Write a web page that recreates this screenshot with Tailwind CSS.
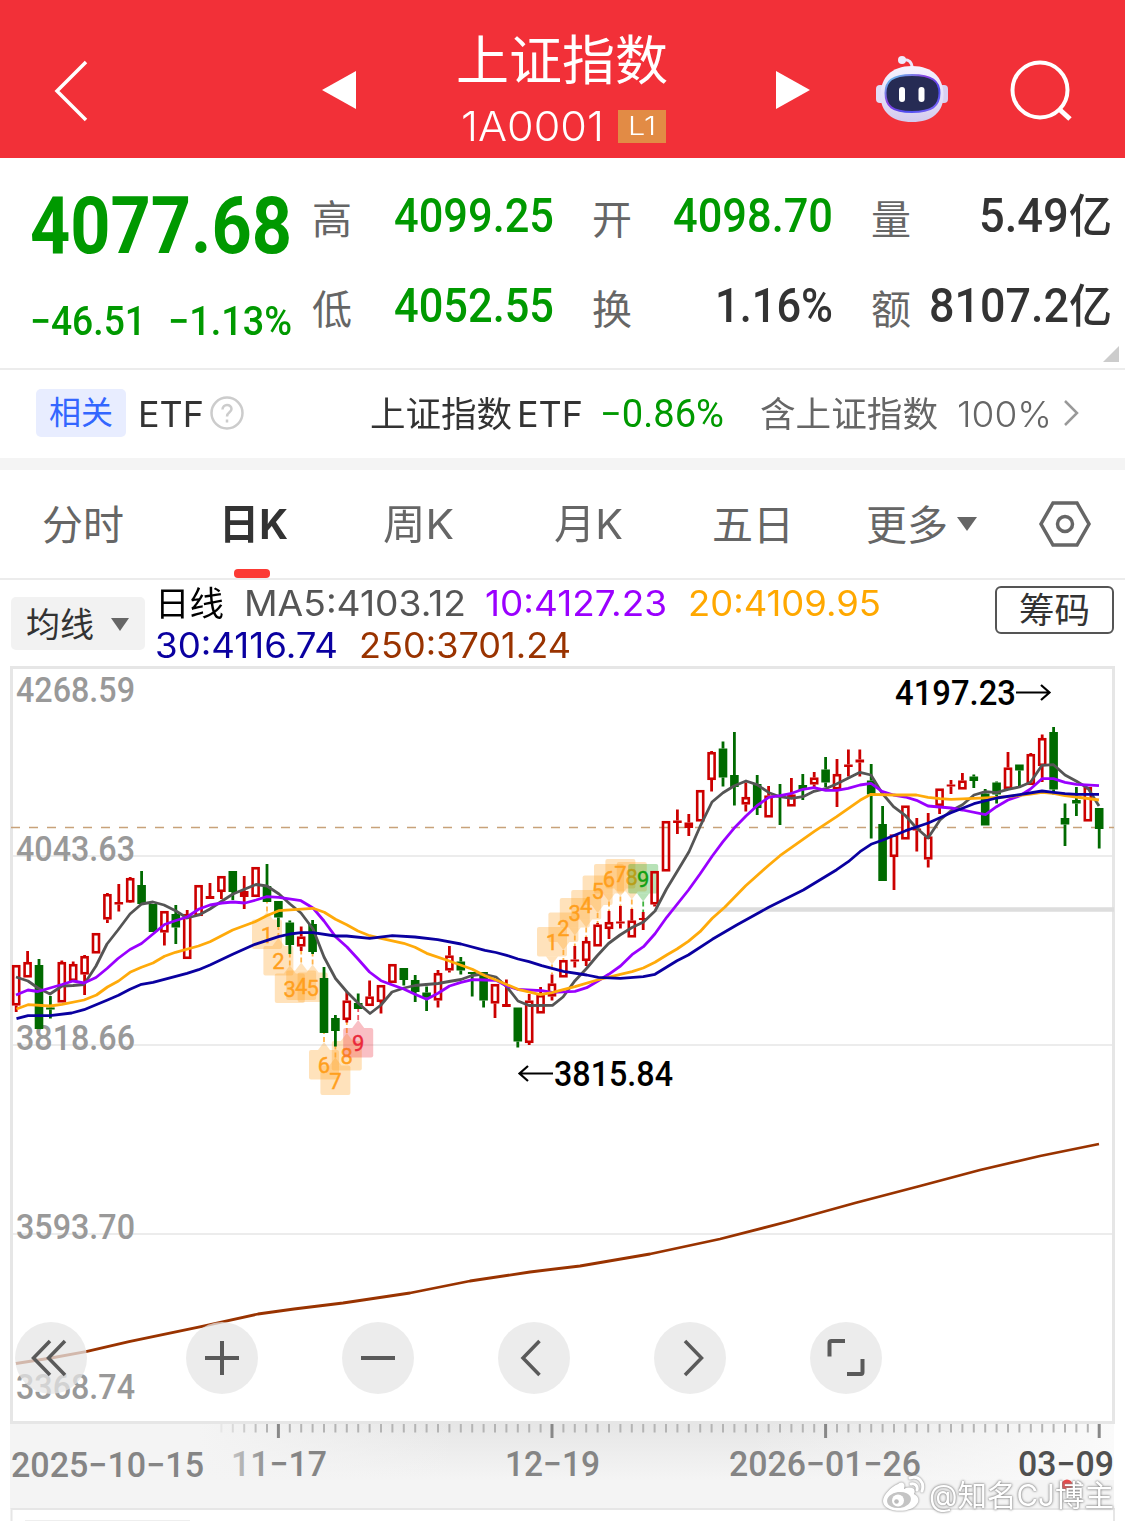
<!DOCTYPE html>
<html lang="zh-CN">
<head>
<meta charset="utf-8">
<title>上证指数</title>
<script src="https://cdn.jsdelivr.net/npm/@tailwindcss/browser@4"></script>
</head>
<body class="w-[1125px] h-[1521px] overflow-hidden bg-white font-['Inter','Noto_Sans_CJK_SC',sans-serif] text-[#333]">

<!-- Header -->
<header class="h-[158px] bg-[#f23038] flex text-white">
  <div class="w-[320px] pl-[52px] pt-[60px]">
    <svg width="38" height="62" viewBox="0 0 38 62" fill="none" stroke="#fff" stroke-width="3.5"><path d="M34 2 5 31 34 60"/></svg>
  </div>
  <div class="w-[138px] pt-[70px]"><svg width="38" height="40"><path d="M2 20 36 1V39Z" fill="#fff"/></svg></div>
  <div class="w-[316px]">
    <div class="h-[76px] -ml-[2px] mt-[23px] leading-[76px] text-[53px]"><span data-w="212">上证指数</span></div>
    <div class="flex items-center h-[54px] pl-[3px]">
      <span class="leading-none text-[41px] font-light" data-w="143">1A0001</span>
      <span class="ml-[14px] w-[48px] h-[33px] bg-[#e28b45] flex items-center justify-center leading-none text-[25px] font-light"><span data-w="28">L1</span></span>
    </div>
  </div>
  <div class="w-[100px] pt-[70px]"><svg width="38" height="40"><path d="M2 1 36 20 2 39Z" fill="#fff"/></svg></div>
  <div class="w-[134px] pt-[52px]">
    <svg width="76" height="74" viewBox="874 52 76 74">
      <defs><linearGradient id="shell" x1="0" y1="0" x2="0" y2="1"><stop offset="0" stop-color="#f6f3ff"/><stop offset=".6" stop-color="#e4def6"/><stop offset="1" stop-color="#d2caee"/></linearGradient>
      <linearGradient id="rim" x1="0" y1="0" x2="1" y2="1"><stop offset="0" stop-color="#5fd8ee"/><stop offset=".4" stop-color="#8b3fe0"/><stop offset=".7" stop-color="#4a4cf0"/><stop offset="1" stop-color="#8e6cf5"/></linearGradient></defs>
      <path d="M902 60C909 59 912 62 912 68" fill="none" stroke="#ece6fb" stroke-width="3"/><circle cx="902" cy="60" r="4" fill="#efeafc"/>
      <rect x="876" y="85" width="9" height="18" rx="4" fill="#e2dcf5"/><rect x="939" y="85" width="9" height="18" rx="4" fill="#d8d0f0"/>
      <path d="M912 66C933 66 943 78 943.500 94C944 112 932 122 912 122C892 122 880 112 880.500 94C881 78 891 66 912 66Z" fill="url(#shell)"/>
      <path d="M912 75C932 75 939.500 81 939.500 93C939.500 106 932 112 912 112C892 112 885.500 106 885.500 93C885.500 81 892 75 912 75Z" fill="#262b54" stroke="url(#rim)" stroke-width="2"/>
      <rect x="899" y="87" width="6" height="15" rx="3" fill="#fff"/><rect x="918.500" y="87" width="6" height="15" rx="3" fill="#fff"/>
    </svg>
  </div>
  <div class="pt-[58px]"><svg width="66" height="66" viewBox="1008 58 66 66" fill="none" stroke="#fff" stroke-width="4"><circle cx="1040" cy="90" r="27.500"/><path d="M1059 109 1070 119" stroke-width="5"/></svg></div>
</header>

<!-- Quote summary -->
<section class="h-[212px] border-b-2 border-[#ececec] flex relative">
  <div class="w-[313px] pl-[30px] font-['Roboto'] text-[#090]">
    <div class="h-[100px] mt-[18px] leading-[100px] text-[79px] font-bold"><span data-w="262">4077.68</span></div>
    <div class="h-[50px] mt-[21px] leading-[50px] text-[40px] font-medium flex">
      <span class="w-[138px]"><span data-w="116">−46.51</span></span><span><span data-w="124">−1.13%</span></span>
    </div>
  </div>
  <div class="-ml-px grid grid-cols-[242px_241px_241px] grid-rows-[90px_90px] gap-x-[38px] pt-[13px] text-[40px] text-[#666] leading-none">
    <div class="flex items-center justify-between"><span class="pt-[8px]">高</span><span class="text-[48px] font-medium font-['Roboto'] text-[#090]" data-w="160">4099.25</span></div>
    <div class="flex items-center justify-between"><span class="pt-[8px]">开</span><span class="text-[48px] font-medium font-['Roboto'] text-[#090]" data-w="160">4098.70</span></div>
    <div class="flex items-center justify-between"><span class="pt-[8px]">量</span><span class="text-[#333] text-[48px] font-medium font-['Roboto','Noto_Sans_CJK_SC']" data-w="133">5.49<span class="text-[46px]">亿</span></span></div>
    <div class="flex items-center justify-between"><span class="pt-[8px]">低</span><span class="text-[48px] font-medium font-['Roboto'] text-[#090]" data-w="160">4052.55</span></div>
    <div class="flex items-center justify-between"><span class="pt-[8px]">换</span><span class="text-[#333] text-[48px] font-medium font-['Roboto']" data-w="118">1.16%</span></div>
    <div class="flex items-center justify-between"><span class="pt-[8px]">额</span><span class="text-[#333] text-[48px] font-medium font-['Roboto','Noto_Sans_CJK_SC']" data-w="183">8107.2<span class="text-[46px]">亿</span></span></div>
  </div>
  <svg class="absolute right-[6px] bottom-[6px]" width="16" height="16"><path d="M16 0V16H0Z" fill="#ccc"/></svg>
</section>

<!-- Related ETF -->
<section class="h-[88px] flex items-center leading-none text-[35px]">
  <span class="ml-[36px] -mt-[2px] w-[90px] h-[48px] rounded-[5px] bg-[#e8edff] text-[#36f] text-[32px] flex items-center justify-center">相关</span>
  <span class="ml-[12px]" data-w="66">ETF</span>
  <svg class="ml-[5px] -mt-[2px]" width="36" height="36" fill="none" stroke="#ccc" stroke-width="2.500"><circle cx="18" cy="18" r="15.500"/><path d="M13.500 14.500C13.500 8.500 22.500 8.500 22.500 14C22.500 17.500 18 17 18 21.500M18 24.500V27.500"/></svg>
  <span class="ml-[125px]" data-w="142">上证指数</span><span class="ml-[5px]" data-w="66">ETF</span>
  <span class="ml-[17px] text-[38px] font-['Roboto'] text-[#090]" data-w="124">−0.86%</span>
  <span class="ml-[36px] text-[#666]" data-w="178">含上证指数</span>
  <span class="ml-[19px] text-[#666] font-light" data-w="95">100%</span>
  <svg class="ml-[10px] -mt-[2px]" width="18" height="28" fill="none" stroke="#999" stroke-width="2.500"><path d="M3 2 15 14 3 26"/></svg>
</section>
<div class="h-[12px] bg-[#f4f4f4]"></div>

<!-- Period tabs -->
<nav class="h-[110px] border-b-2 border-[#ececec] flex items-center leading-none text-[41px] text-[#666] relative">
  <span class="w-[177px] pl-[42px] pt-[3px]">分时</span>
  <span class="w-[165px] pl-[42px] pt-px font-bold text-[#333]"><span data-w="69">日K</span></span>
  <span class="w-[171px] pl-[41px] pt-px"><span data-w="71">周K</span></span>
  <span class="w-[158px] pl-[41px] pt-px"><span data-w="69">月K</span></span>
  <span class="w-[155px] pl-[41px] pt-[3px]">五日</span>
  <span class="pl-[40px] pt-[3px]">更多</span>
  <svg class="ml-[8px]" width="22" height="16"><path d="M1 1H21L11 15Z" fill="#666"/></svg>
  <svg class="ml-[60px]" width="54" height="48" viewBox="0 0 54 48" fill="none" stroke="#666" stroke-width="3.500"><path d="M15 3H39L51 24 39 45H15L3 24Z"/><circle cx="27" cy="24" r="7.500"/></svg>
  <span class="absolute left-[234px] bottom-0 w-[36px] h-[9px] rounded-[4px] bg-[#fc3a34]"></span>
</nav>

<!-- Moving average legend -->
<section class="h-[86px] flex">
  <div class="ml-[11px] mt-[17px] w-[134px] h-[53px] rounded-[5px] bg-[#f2f2f2] flex items-center pl-[15px] pt-[2px] leading-none text-[34px]">均线
    <svg class="ml-[16px]" width="20" height="14"><path d="M1 0H19L10 13Z" fill="#666"/></svg></div>
  <div class="ml-[10px] w-[840px] pt-[2px] text-[35px]">
    <div class="h-[42px] flex items-center leading-none">
      <span class="text-[34px] text-black pt-[2px]" data-w="69">日线</span>
      <span class="ml-[20px] text-[#555]" data-w="222">MA5:4103.12</span>
      <span class="ml-[19px] text-[#9a00ff]" data-w="182">10:4127.23</span>
      <span class="ml-[21px] text-[#ffa800]" data-w="193">20:4109.95</span>
    </div>
    <div class="h-[42px] flex items-center leading-none">
      <span class="text-[#0a00a0]" data-w="183">30:4116.74</span>
      <span class="ml-[21px] text-[#993300]" data-w="212">250:3701.24</span>
    </div>
  </div>
  <div class="mt-[6px] w-[119px] h-[48px] rounded-[6px] border-2 border-[#555] flex items-center justify-center pt-[2px] leading-none text-[35.5px]">筹码</div>
</section>

<!-- Candlestick chart -->
<section class="h-[758px] relative">
  <svg id="chart" class="block" width="1125" height="758" viewBox="0 666 1125 758" fill="none">
    <rect x="11.500" y="667.500" width="1102" height="755" stroke="#e6e6e6" stroke-width="3"/>
    <path d="M13 856H1112M13 1045H1112M13 1234H1112" stroke="#e6e6e6" stroke-width="1.500"/>
    <path d="M655 909.500H1114" stroke="#ddd" stroke-width="4.500"/>
    <path d="M11 827.500H1114" stroke="#c8a27a" stroke-width="1.500" stroke-dasharray="9 9"/>
    <g font-family="Roboto" font-size="35" font-weight="500" fill="#999">
      <text x="16" y="702" textLength="119" lengthAdjust="spacingAndGlyphs">4268.59</text>
      <text x="16" y="861" textLength="119" lengthAdjust="spacingAndGlyphs">4043.63</text>
      <text x="16" y="1050" textLength="119" lengthAdjust="spacingAndGlyphs">3818.66</text>
      <text x="16" y="1239" textLength="119" lengthAdjust="spacingAndGlyphs">3593.70</text>
      <text x="16" y="1398.500" textLength="119" lengthAdjust="spacingAndGlyphs">3368.74</text>
    </g>
    <g id="tags" font-family="Roboto" font-size="22" font-weight="400" text-anchor="middle"></g>
    <g id="candles"></g>
    <g stroke-width="2.800" stroke-linejoin="round">
      <polyline stroke="#993300" points="16,1363.500 51,1358 86,1351.700 129,1341.700 201,1326.700 258,1314 294,1309 343,1303 410,1293 470,1281 530,1272 580,1266 650,1254 720,1239 790,1221 855,1203 920,1186 980,1170 1040,1156 1099,1144"/>
      <polyline stroke="#555" points="16,977 28,981 38,988 50,994 62,986 73,985.500 84,984.500 96,966 107,944 118,930 130,914 141.600,904 153,902 164,905 176,911 187,918 199,915 210,909 222,901 233,894 245,889 256,884.500 267,886 279,894 290,904 301,913 313,929 324,957 335.500,978.500 347,992 358,1003 370,1013.500 381,1005 392,992 404,988 415,985.500 426,984.500 438,983.500 449,981.500 461,979.500 472,975.500 483,974 496,977 506.700,986.700 518,1001 529,1005.500 552.500,1005.300 563,997 575,980.700 586.500,968.500 597,956 608.500,943.500 620,935 632,927.500 643.500,922 655,911 666.500,889 677,871.700 689,851.700 700,826.700 712,802 723,792.700 734,786 746,781 757,784.700 769,792.700 780,796.700 791.500,798.300 803,796.700 814,791.300 825.500,788.700 836.500,784 848,778.300 860,772.300 871,775 882,793 893.500,806.700 905.500,815.700 916.500,828 928,838 940,820 951,810.700 962.500,804.700 974,795 985.500,791.700 996.500,792.700 1008,789.300 1019.500,787 1030.500,782.300 1042,765.300 1053.500,764.700 1065,775 1076.500,781.300 1088,788.300 1099,806"/>
      <polyline stroke="#9a00ff" points="16,995 28,990 38,991.500 50,988 62,984.500 73,981 84,983 96,977.500 107,968.500 118,958.500 130,949.500 141.500,943.500 153,934 164.500,924.500 176,920.500 187,917 199,909 210,905 222,903 233,902 245,903 256,900 267,896.700 279,897.300 301,900.700 313,908 324,921 335.500,936.700 347,947 358,959 369.500,972 381,980.700 392.500,985 403.700,989 415,994.300 426.700,999.300 438,993.300 449.500,986 461,982.300 472.500,979.700 485,980 496,980.300 506.700,986 518,989.500 541.700,990.700 552,992.300 575,991.300 586.700,987.700 597.500,981.300 608.700,974.300 620.500,966 632,954.700 643.500,946.700 655,933.700 666.700,917.300 688.500,890 700,874 712.300,856 723,841.700 734,828.300 746,816 757,805.700 768.700,797.300 780,795.700 791.700,793.300 803,789.300 814,787.700 825.700,790.300 836.700,790.300 848,788.300 860,785 871,783.300 882,791.300 893.500,795 905.500,797 916.500,800.300 928,806 951,808 962.500,810 985.500,814.700 996.500,806.700 1008,800 1019.500,796 1030.500,789 1042,778.700 1053.500,778.700 1065,782.300 1076.500,784.300 1099,785.700"/>
      <polyline stroke="#ffaa0a" points="16.500,1009 28,1004.700 50,1006 62,1004.300 84,1000 96.500,995 107.500,987 118.500,981 130,972.300 141.500,967.300 153,963 164.500,956.300 175.500,952.300 198.500,946 210,941.700 232.700,930 255,921.700 266.700,915.700 278.700,910.700 313,908.300 324.300,912.300 335.500,919.300 346.700,924.700 358,931 369.700,935.700 381,938.300 403.700,943.300 415,947.300 426.700,953.300 449.300,961 472.300,969.300 485,975.700 496,980 518,989.300 540.300,994.700 552,992.700 563.300,989.700 575,986.700 597.300,980 620.300,974.300 632,971.700 643.300,968 655,962.300 666.700,955 677,949 688.300,941.300 700,931.700 712.300,918.300 725,907 745.700,885.700 768.700,865.300 780,855.700 814.300,831.300 836.700,816.700 860,800.300 871,794.300 893.500,795 916.500,795 928,797.300 940,798.700 951,799.300 974,798.300 996.500,797.300 1008,796.700 1030.500,794 1042,792.300 1053.500,793.300 1065,795.700 1076.500,797 1099,800"/>
      <polyline stroke="#0a00a0" points="16.500,1018.700 28,1015.700 50,1015.700 71.700,1013 84,1009.700 107.500,1000 118.500,995.300 130,989.300 141.500,984.300 153,982.300 187,973.300 198.700,969.700 210,965 232.700,954.300 255,944.300 278.500,936.700 290,934 301,932.700 313,932.700 335.300,936 346.700,936 369.700,938.300 392.300,935.700 415,937 437.700,939.700 461,944 485,950.300 496,952.500 506.700,955.300 518,959 529,961.700 541.700,965.700 563.300,971.300 586.700,975 598.300,977.300 620.300,978.300 643.300,976.700 655,974.300 677,960.700 688.300,955 712.300,939.300 736.700,925 768.700,907.300 803.300,890 836.700,869.700 848.300,861.700 860,851.700 871,844.300 882.300,840.300 905.700,830.700 928.300,823 951,812.700 974,803.700 996.700,798 1019.700,794.700 1042,791 1053.700,792.300 1065,793.700 1076.500,794.300 1099,794.300"/>
    </g>
    <g font-family="Roboto" font-size="35" font-weight="500" fill="#000">
      <text x="895" y="705" textLength="121" lengthAdjust="spacingAndGlyphs">4197.23</text>
      <text x="554" y="1086" textLength="119" lengthAdjust="spacingAndGlyphs">3815.84</text>
    </g>
    <path d="M1016 692.500H1049M1041 685 1049.500 692.500 1041 700M553 1073.500H520M528 1066 519.500 1073.500 528 1081" stroke="#000" stroke-width="2.200"/>
  </svg>
  <!-- Floating chart controls -->
  <div class="absolute left-[15px] top-[656px] flex gap-[84px]">
    <svg class="mr-[15px]" width="72" height="72"><circle cx="36" cy="36" r="36" fill="#e6e6e6" fill-opacity=".75"/><path d="M35 19 18.500 36 35 53M50 19 33.500 36 50 53" fill="none" stroke="#5a5a5a" stroke-width="3.500"/></svg>
    <svg width="72" height="72"><circle cx="36" cy="36" r="36" fill="#e6e6e6" fill-opacity=".75"/><path d="M19 36H53M36 19V53" fill="none" stroke="#5a5a5a" stroke-width="4"/></svg>
    <svg width="72" height="72"><circle cx="36" cy="36" r="36" fill="#e6e6e6" fill-opacity=".75"/><path d="M19 36H53" fill="none" stroke="#5a5a5a" stroke-width="4"/></svg>
    <svg width="72" height="72"><circle cx="36" cy="36" r="36" fill="#e6e6e6" fill-opacity=".75"/><path d="M41.500 19 25 36 41.500 53" fill="none" stroke="#5a5a5a" stroke-width="3.500"/></svg>
    <svg width="72" height="72"><circle cx="36" cy="36" r="36" fill="#e6e6e6" fill-opacity=".75"/><path d="M31 19 47.500 36 31 53" fill="none" stroke="#5a5a5a" stroke-width="3.500"/></svg>
    <svg width="72" height="72"><circle cx="36" cy="36" r="36" fill="#e6e6e6" fill-opacity=".75"/><path d="M19.500 34.500V21Q19.500 19 21.500 19H35M37 52H51Q52.500 52 52.500 50V37" fill="none" stroke="#5a5a5a" stroke-width="4"/></svg>
  </div>
</section>

<!-- Time axis -->
<section class="h-[97px] relative">
  <svg class="block" width="1125" height="97" viewBox="0 1424 1125 97">
    <defs>
      <linearGradient id="shade" x1="0" y1="0" x2="0" y2="1"><stop offset="0" stop-color="#e6e6e6"/><stop offset="1" stop-color="#f4f4f4"/></linearGradient>
      <linearGradient id="sideFade"><stop offset="0" stop-color="#f4f4f4"/><stop offset=".28" stop-color="#f4f4f4" stop-opacity="0"/><stop offset=".6" stop-color="#f8f8f8" stop-opacity="0"/><stop offset="1" stop-color="#fafafa"/></linearGradient>
      <linearGradient id="firstDigit" gradientUnits="userSpaceOnUse" x1="225" y1="0" x2="275" y2="0"><stop offset="0" stop-color="#ccc"/><stop offset="1" stop-color="#858585"/></linearGradient>
    </defs>
    <rect x="10" y="1424" width="1104" height="85" fill="#f4f4f4"/>
    <rect x="200" y="1424" width="914" height="55" fill="url(#shade)"/>
    <rect x="199" y="1424" width="915" height="56" fill="url(#sideFade)"/>
    <g id="ticks"></g>
    <g font-family="Roboto" font-size="35" font-weight="500" fill="#858585">
      <text x="11" y="1476.500" textLength="193" lengthAdjust="spacingAndGlyphs">2025−10−15</text>
      <text x="231" y="1475.500" textLength="96" lengthAdjust="spacingAndGlyphs" fill="url(#firstDigit)">11−17</text>
      <text x="505" y="1475.500" textLength="95" lengthAdjust="spacingAndGlyphs">12−19</text>
      <text x="729" y="1475.500" textLength="192" lengthAdjust="spacingAndGlyphs">2026−01−26</text>
      <text x="1018" y="1475.500" textLength="96" lengthAdjust="spacingAndGlyphs" fill="#505050">03−09</text>
    </g>
    <rect x="11.500" y="1509" width="1102.500" height="20" fill="#fff" stroke="#e6e6e6" stroke-width="2"/>
    <path d="M25 1520.500H190" stroke="#eee"/>
    <circle cx="1067" cy="1485" r="5.500" fill="#e8484a"/>
  </svg>
  <!-- Watermark -->
  <div class="absolute left-[882px] top-[49px] flex items-center text-white">
    <svg class="drop-shadow-[0_0_1px_#777]" width="46" height="40" viewBox="0 0 46 40">
      <path d="M16 9C20 6 24 8 22 14C28 11 35 13 32 19C36 21 38 25 35 29C29 39 1 38 1 26C1 20 9 12 16 9Z" fill="#fff"/>
      <ellipse cx="17" cy="25" rx="12" ry="8" fill="#c4c4c4" transform="rotate(-8 17 25)"/><circle cx="16" cy="25.500" r="6" fill="#fff"/><circle cx="14.500" cy="26.500" r="2.300" fill="#bbb"/>
      <path d="M28 3C36 0 43 7 40 16M29 9C33 8 36 11 35 15" fill="none" stroke="#fff" stroke-width="3" stroke-linecap="round"/>
    </svg>
    <span class="ml-[1px] leading-[44px] text-[30px] [text-shadow:0_0_2px_#777,0_0_3px_#999] whitespace-nowrap" data-w="185">@知名CJ博主</span>
  </div>
</section>

<script>
  // Each candle: colour, high, body top, body bottom, low (chart y units)
  const candles = `R 965 965 1005.5 1012|R 951 962 977.5 977|G 959 965 1029 1029|G 996 1007.5 1009.5 1018.5|R 960.5 962 1002.5 1002|R 961.5 964 981 981|R 955 956 974.5 995|R 933 933 953.5 953|R 893 894 919.5 923|R 884 902 904.5 911.5|R 877 878 902.5 903|G 871 885 904 904|G 904 904 932 932|R 911 911 932.5 945.5|G 905 914 927.5 944|R 910 914 959 959|R 885 885 916 916|R 883 896 899 899|R 876 876 892 899|G 871 871 892 900|R 876 891 897 909|R 867 867 897 897|G 864 886 902 902|G 901 901 917.5 927|G 920.5 922.5 945 954|R 926.5 936.5 946.5 951|G 920 924 952 954|G 967 978 1033 1033|G 1015 1018 1031 1046.5|R 992 1000.5 1020 1022.5|G 993.5 1003 1009 1009|R 980.5 996.5 1006 1006|R 985 985 1002 1013.5|R 964 964 983 983|G 968 968 980 985.5|G 975 980 992 1002|G 986.5 992.5 997.5 1011|R 970 973 1000.5 1007.5|R 946 955.5 970.5 972.5|G 957 961.5 970.5 974.5|G 972 972 974 996.5|G 972 972 1000.5 1007.5|R 984 984 1003.5 1018|R 979.5 1004 1007 1007|G 1007.5 1007.5 1041.5 1047.5|R 994 1000.5 1043 1045|R 987 995 1013.5 1013|R 974.5 983.5 996.5 1000.5|R 960 960 977.5 977|R 946 959.5 961.5 967.5|R 937 941 961 966|R 923 924.5 946.5 946|R 911 922 929 939|R 906 921.5 923.5 928.5|R 909 920.5 937.5 937|R 912 918 920 930|R 871 871 904.5 906.5|R 821 821 871.5 871|R 809.5 820.5 823 834|R 814 822.5 828 836|R 790 790 821.5 821|R 751 752 780 791.5|G 741.5 748.5 777.5 786.5|G 732 775 787 805.5|R 782.5 797 804.5 811.5|G 775 784 808 815|R 786 795.5 817.5 817|G 784 796 797.5 825|R 778 794.5 806.5 806|G 774 785 790 800|R 772 777.5 784.5 787.5|G 757 769.5 782.5 787|R 759 774 789.5 807|R 749.5 764.5 767 776.5|R 749.5 759.5 762.5 776.5|G 764 780.5 794.5 838.5|G 806 824 881 881|R 834.5 834.5 857 890|R 805.5 805.5 839.5 839|R 818 828.5 830.5 851.5|R 813 836.5 859.5 867.5|R 788.5 788.5 806 814|R 780 784.5 786.5 794|R 773 780.5 789.5 789|G 774.5 776.5 781 788|G 789 793.5 825.5 825|G 781.5 782.5 794.5 803.5|R 752 767.5 789 789|G 764.5 764.5 770.5 786.5|R 753 754 785 785|R 734.5 738 766 782|G 727 732 789.5 794.5|G 803.5 818 824.5 846|G 787 800 803.5 816|R 787 787 821.5 821|G 808 808 829 848.5`.split('|');
  const X = i => 16.2 + i * 11.4;
  document.getElementById('candles').innerHTML = candles.map((c, i) => {
    const [k, ...v] = c.split(' '), [h, t, b, l] = v.map(Number), x = X(i), col = k === 'R' ? '#cc0000' : '#006a00';
    const body = k === 'R' && b - t > 6.5
      ? `<rect x="${x - 3}" y="${t + 1.25}" width="6" height="${b - t - 2.5}" stroke="${col}" stroke-width="2.6"/>`
      : `<rect x="${x - 4.3}" y="${t}" width="8.600" height="${b - t}" fill="${col}"/>`;
    return `<path d="M${x} ${h}V${t}M${x} ${b}V${Math.max(l, b)}" stroke="${col}" stroke-width="2.800"/>` + body;
  }).join('');

  // Sequence tags: candle index, label, box top, pointer direction, anchor y
  const tags = [[22,1,919.5,-1,902],[23,2,946,-1,927],[24,3,973.5,-1,954],[25,4,970.5,-1,951],[26,5,972.5,-1,954],[27,6,1050,-1,1033],[28,7,1065.5,-1,1046],[29,8,1041,-1,1022],[30,9,1028,-1,1009],
    [47,1,927,1,974],[48,2,912.5,1,960],[49,3,898,1,946],[50,4,890,1,937],[51,5,875.5,1,923],[52,6,864,1,911],[53,7,859,1,906],[54,8,862,1,909],[55,9,864,1,912]];
  document.getElementById('tags').innerHTML = tags.map(([i, n, y, d, a]) => {
    const x = X(i), fill = n < 9 ? '#ffa01e' : d < 0 ? '#ea2a3c' : '#12a012', e = d < 0 ? y : y + 29.5, tip = e + d * 8;
    return `<rect x="${x - 15}" y="${y}" width="30" height="29.500" rx="2" fill="${fill}" fill-opacity=".3"/><path d="M${x - 6} ${e}L${x} ${tip}L${x + 6} ${e}Z" fill="${fill}" fill-opacity=".3"/>` +
      `<path d="M${x} ${tip}V${a}" stroke="${fill}" stroke-width="1.800" stroke-dasharray="5 3" stroke-opacity=".8"/><text x="${x}" y="${y + 23}" fill="${fill}" stroke="${fill}" stroke-width=".4">${n}</text>`;
  }).join('');

  // Axis ticks, fading in from the left
  let t = '';
  for (let i = 18; i < 96; i++) {
    const big = (i - 23) % 24 === 0;
    t += `<path d="M${X(i)} 1424v${big ? 14 : 8.5}" stroke="${big ? '#888' : '#b4b4b4'}" stroke-width="${big ? 3 : 2}" opacity="${Math.min(1, (i - 17) / 5)}"/>`;
  }
  document.getElementById('ticks').innerHTML = t;

  // Condense numerals and labels to their column widths
  function fit() {
    document.querySelectorAll('[data-w]').forEach(el => {
      el.style.cssText = 'display:inline-block;white-space:nowrap;flex-shrink:0;transform-origin:0 50%';
      const n = el.getBoundingClientRect().width, w = +el.dataset.w;
      el.style.transform = `scaleX(${w / n})`;
      el.style.marginRight = (w - n) + 'px';
    });
  }
  fit();
  addEventListener('load', fit);
  new ResizeObserver(fit).observe(document.body);
</script>
</body>
</html>
